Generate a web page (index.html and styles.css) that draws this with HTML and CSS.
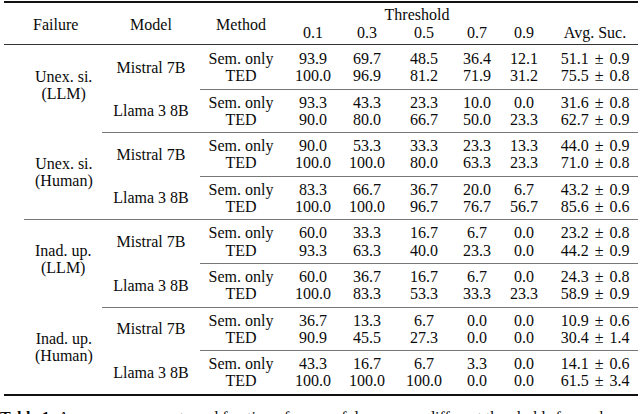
FILE: index.html
```html
<!DOCTYPE html>
<html>
<head>
<meta charset="utf-8">
<link rel="stylesheet" href="styles.css">
</head>
<body>
<table class="results">
  <colgroup>
    <col class="c-sp"><col class="c-fail"><col class="c-model"><col class="c-method">
    <col class="c-t1"><col class="c-t3"><col class="c-t5"><col class="c-t7"><col class="c-t9"><col class="c-avg">
  </colgroup>
  <thead>
    <tr class="h1">
      <th class="sp" rowspan="2"></th>
      <th class="fail" rowspan="2">Failure</th>
      <th rowspan="2">Model</th>
      <th rowspan="2">Method</th>
      <th colspan="5">Threshold</th>
      <th></th>
    </tr>
    <tr class="h2">
      <th>0.1</th><th>0.3</th><th>0.5</th><th>0.7</th><th>0.9</th><th>Avg. Suc.</th>
    </tr>
  </thead>
  <tbody>
    <tr class="a">
      <td class="sp" rowspan="16"></td>
      <td class="fail" rowspan="4"><span class="stack">Unex. si.<br>(LLM)</span></td>
      <td class="model" rowspan="2">Mistral 7B</td>
      <td>Sem. only</td><td>93.9</td><td>69.7</td><td>48.5</td><td>36.4</td><td>12.1</td><td>51.1<span class="pm">±</span>0.9</td>
    </tr>
    <tr class="b"><td>TED</td><td>100.0</td><td>96.9</td><td>81.2</td><td>71.9</td><td>31.2</td><td>75.5<span class="pm">±</span>0.8</td></tr>
    <tr class="a l3">
      <td class="model" rowspan="2">Llama 3 8B</td>
      <td>Sem. only</td><td>93.3</td><td>43.3</td><td>23.3</td><td>10.0</td><td>0.0</td><td>31.6<span class="pm">±</span>0.8</td>
    </tr>
    <tr class="b"><td>TED</td><td>90.0</td><td>80.0</td><td>66.7</td><td>50.0</td><td>23.3</td><td>62.7<span class="pm">±</span>0.9</td></tr>

    <tr class="a l2">
      <td class="fail" rowspan="4"><span class="stack">Unex. si.<br>(Human)</span></td>
      <td class="model" rowspan="2">Mistral 7B</td>
      <td>Sem. only</td><td>90.0</td><td>53.3</td><td>33.3</td><td>23.3</td><td>13.3</td><td>44.0<span class="pm">±</span>0.9</td>
    </tr>
    <tr class="b"><td>TED</td><td>100.0</td><td>100.0</td><td>80.0</td><td>63.3</td><td>23.3</td><td>71.0<span class="pm">±</span>0.8</td></tr>
    <tr class="a l3">
      <td class="model" rowspan="2">Llama 3 8B</td>
      <td>Sem. only</td><td>83.3</td><td>66.7</td><td>36.7</td><td>20.0</td><td>6.7</td><td>43.2<span class="pm">±</span>0.9</td>
    </tr>
    <tr class="b"><td>TED</td><td>100.0</td><td>100.0</td><td>96.7</td><td>76.7</td><td>56.7</td><td>85.6<span class="pm">±</span>0.6</td></tr>

    <tr class="a l1">
      <td class="fail" rowspan="4"><span class="stack">Inad. up.<br>(LLM)</span></td>
      <td class="model" rowspan="2">Mistral 7B</td>
      <td>Sem. only</td><td>60.0</td><td>33.3</td><td>16.7</td><td>6.7</td><td>0.0</td><td>23.2<span class="pm">±</span>0.8</td>
    </tr>
    <tr class="b"><td>TED</td><td>93.3</td><td>63.3</td><td>40.0</td><td>23.3</td><td>0.0</td><td>44.2<span class="pm">±</span>0.9</td></tr>
    <tr class="a l3">
      <td class="model" rowspan="2">Llama 3 8B</td>
      <td>Sem. only</td><td>60.0</td><td>36.7</td><td>16.7</td><td>6.7</td><td>0.0</td><td>24.3<span class="pm">±</span>0.8</td>
    </tr>
    <tr class="b"><td>TED</td><td>100.0</td><td>83.3</td><td>53.3</td><td>33.3</td><td>23.3</td><td>58.9<span class="pm">±</span>0.9</td></tr>

    <tr class="a l2">
      <td class="fail" rowspan="4"><span class="stack">Inad. up.<br>(Human)</span></td>
      <td class="model" rowspan="2">Mistral 7B</td>
      <td>Sem. only</td><td>36.7</td><td>13.3</td><td>6.7</td><td>0.0</td><td>0.0</td><td>10.9<span class="pm">±</span>0.6</td>
    </tr>
    <tr class="b"><td>TED</td><td>90.9</td><td>45.5</td><td>27.3</td><td>0.0</td><td>0.0</td><td>30.4<span class="pm">±</span>1.4</td></tr>
    <tr class="a l3">
      <td class="model" rowspan="2">Llama 3 8B</td>
      <td>Sem. only</td><td>43.3</td><td>16.7</td><td>6.7</td><td>3.3</td><td>0.0</td><td>14.1<span class="pm">±</span>0.6</td>
    </tr>
    <tr class="b"><td>TED</td><td>100.0</td><td>100.0</td><td>100.0</td><td>0.0</td><td>0.0</td><td>61.5<span class="pm">±</span>3.4</td></tr>
  </tbody>
</table>
<p class="caption"><b>Table 1:</b> Average success rate and fraction of successful runs over different thresholds for each failure type and model, with the standard error of the mean.</p>
</body>
</html>
```

FILE: styles.css
```css
html, body {
  margin: 0;
  padding: 0;
  background: #ffffff;
}

body,
table,
th,
td,
p {
  font-family: "Liberation Serif", "Times New Roman", "DejaVu Serif", serif;
  font-size: 16px;
  color: #0a0a0a;
}

body {
  width: 640px;
  height: 414px;
  overflow: hidden;
}

.results {
  width: 634px;
  margin: 1px 0 0 4px;
  table-layout: fixed;
  border-collapse: separate;
  border-spacing: 0;
  border-top: 2px solid #111111;
  border-bottom: 2px solid #111111;
}

.c-sp { width: 20px; }
.c-fail { width: 78px; }
.c-model { width: 98px; }
.c-method { width: 82px; }
.c-t1 { width: 62px; }
.c-t3 { width: 46px; }
.c-t5 { width: 68px; }
.c-t7 { width: 38px; }
.c-t9 { width: 56px; }
.c-avg { width: 86px; }

.results th,
.results td {
  padding: 0;
  font-weight: normal;
  text-align: center;
  vertical-align: middle;
  white-space: nowrap;
  line-height: 18px;
}

.h1 th { padding-top: 3px; }
.h2 th { padding-bottom: 2px; }
.h2 th,
.h1 th[rowspan] {
  border-bottom: 1px solid #333333;
}
.results th.fail {
  text-align: left;
  padding-left: 9px;
}

.results td { line-height: 17.3px; }
.a td {
  padding-top: 4px;
  border-top: 1px solid transparent;
}
.b td { padding-bottom: 4px; }
.results td.sp { padding: 0; border-top: 0; }

.results td.fail {
  text-align: left;
  padding: 0 0 8px 11px;
}
.results td.model { padding: 0; }

.stack {
  display: inline-block;
  text-align: center;
  line-height: 17px;
}

.l3 td { border-top-color: #777777; }
.l3 td.model { border-top-color: transparent; }
.l2 td { border-top-color: #777777; }
.l2 td.fail { border-top-color: transparent; }
.l1 td { border-top-color: #777777; }

.pm {
  margin: 0 6px;
}

.caption {
  width: 636px;
  margin: 13px 0 0 0;
  line-height: 18px;
}
```
